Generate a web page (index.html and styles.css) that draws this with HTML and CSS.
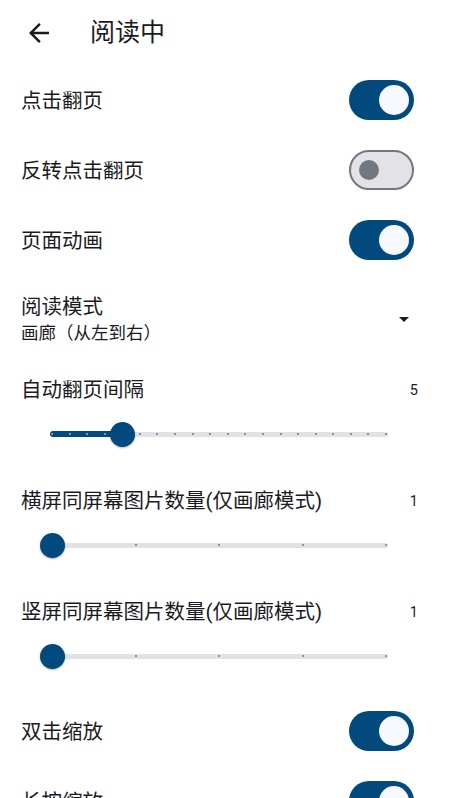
FILE: index.html
```html
<!DOCTYPE html>
<html lang="zh-CN">
<head>
<meta charset="utf-8">
<title>阅读中</title>
<link rel="stylesheet" href="styles.css">
</head>
<body>
<div class="screen">
  <header class="appbar">
    <span class="back">
      <svg viewBox="0 0 24 24" width="30" height="30"><path d="M20 11H7.83l5.59-5.59L12 4l-8 8 8 8 1.41-1.41L7.83 13H20v-2z" fill="#1b1b1f"/></svg>
    </span>
    <h1 class="title">阅读中</h1>
  </header>

  <div class="row">
    <span class="label">点击翻页</span>
    <span class="switch on"><span class="thumb"></span></span>
  </div>
  <div class="row">
    <span class="label">反转点击翻页</span>
    <span class="switch off"><span class="thumb"></span></span>
  </div>
  <div class="row">
    <span class="label">页面动画</span>
    <span class="switch on"><span class="thumb"></span></span>
  </div>

  <div class="row dropdown">
    <div class="texts">
      <div class="label">阅读模式</div>
      <div class="sub">画廊（从左到右）</div>
    </div>
    <span class="caret"></span>
  </div>

  <div class="slider-sec">
    <div class="slider-head">
      <span class="label">自动翻页间隔</span>
      <span class="value">5</span>
    </div>
    <div class="slider">
      <div class="track"></div>
      <div class="active" style="width:72px"></div>
      <div class="ticks">
        <i class="a"></i><i class="a"></i><i class="a"></i><i class="a"></i><i></i><i></i><i></i><i></i><i></i><i></i><i></i><i></i><i></i><i></i><i></i><i></i><i></i><i></i><i></i><i></i>
      </div>
      <div class="knob" style="left:72px"></div>
    </div>
  </div>

  <div class="slider-sec">
    <div class="slider-head">
      <span class="label">横屏同屏幕图片数量(仅画廊模式)</span>
      <span class="value">1</span>
    </div>
    <div class="slider">
      <div class="track"></div>
      <div class="ticks">
        <i></i><i></i><i></i><i></i><i></i>
      </div>
      <div class="knob" style="left:2px"></div>
    </div>
  </div>

  <div class="slider-sec">
    <div class="slider-head">
      <span class="label">竖屏同屏幕图片数量(仅画廊模式)</span>
      <span class="value">1</span>
    </div>
    <div class="slider">
      <div class="track"></div>
      <div class="ticks">
        <i></i><i></i><i></i><i></i><i></i>
      </div>
      <div class="knob" style="left:2px"></div>
    </div>
  </div>

  <div class="row">
    <span class="label">双击缩放</span>
    <span class="switch on"><span class="thumb"></span></span>
  </div>
  <div class="row">
    <span class="label">长按缩放</span>
    <span class="switch on"><span class="thumb"></span></span>
  </div>
</div>
</body>
</html>
```

FILE: styles.css
```css
* { box-sizing: border-box; }
html, body {
  margin: 0;
  padding: 0;
  background: #ffffff;
}
body {
  font-family: Roboto, "Noto Sans CJK SC", "Noto Sans", sans-serif;
  color: #1b1b1f;
  overflow: hidden;
  height: 798px;
}
.screen {
  display: flex;
  flex-direction: column;
  width: 449px;
}
.appbar {
  height: 65px;
  display: flex;
  align-items: center;
  padding-left: 24px;
  flex-shrink: 0;
}
.back {
  width: 30px;
  height: 30px;
  display: flex;
}
.title {
  margin: 0 0 0 36px;
  font-size: 25px;
  font-weight: 400;
  line-height: 30px;
}
.row {
  height: 70px;
  flex-shrink: 0;
  display: flex;
  align-items: center;
  justify-content: space-between;
  padding: 0 35px 0 21px;
}
.label {
  font-size: 20.5px;
  line-height: 26px;
  padding-top: 2px;
}
.switch {
  width: 65px;
  height: 40px;
  border-radius: 20px;
  display: flex;
  align-items: center;
}
.switch.on {
  background: #024a7e;
  justify-content: flex-end;
  padding-right: 5px;
}
.switch.on .thumb {
  width: 30px;
  height: 30px;
  border-radius: 50%;
  background: #f6f8ff;
}
.switch.off {
  background: #e2e2e7;
  border: 2.5px solid #73777f;
  padding-left: 7.5px;
}
.switch.off .thumb {
  width: 20px;
  height: 20px;
  border-radius: 50%;
  background: #73777f;
}
.dropdown {
  height: 88px;
  padding-right: 40px;
}
.texts {
  display: flex;
  flex-direction: column;
}
.sub {
  font-size: 17.5px;
  line-height: 26px;
}
.caret {
  width: 0;
  height: 0;
  border-left: 5px solid transparent;
  border-right: 5px solid transparent;
  border-top: 5px solid #1b1b1f;
  margin-top: 1px;
}
.slider-sec {
  height: 111px;
  flex-shrink: 0;
  padding-top: 13px;
  display: flex;
  flex-direction: column;
}
.slider-head {
  height: 28px;
  display: flex;
  align-items: center;
  justify-content: space-between;
  padding: 0 31px 0 21px;
}
.slider-head .label {
  line-height: 28px;
  padding-top: 0;
}
.value {
  font-family: Roboto, "Noto Sans", sans-serif;
  font-size: 14.5px;
}
.slider {
  position: relative;
  margin-left: 50px;
  width: 338px;
  height: 60px;
}
.track {
  position: absolute;
  left: 0;
  right: 0;
  top: 27.5px;
  height: 5px;
  border-radius: 3px;
  background: #e1e2e8;
}
.active {
  position: absolute;
  left: 0;
  top: 27px;
  height: 6px;
  border-radius: 3px;
  background: #024a7e;
}
.ticks {
  position: absolute;
  left: 1px;
  right: 1px;
  top: 29px;
  height: 2px;
  display: flex;
  justify-content: space-between;
}
.ticks i {
  width: 2px;
  height: 2px;
  background: #8d9199;
}
.ticks i.a {
  background: #7d97b6;
}
.knob {
  position: absolute;
  top: 17.5px;
  width: 25px;
  height: 25px;
  margin-left: -12.5px;
  border-radius: 50%;
  background: #024a7e;
  box-shadow: 0 1px 2px rgba(0, 0, 0, 0.3);
}
```
